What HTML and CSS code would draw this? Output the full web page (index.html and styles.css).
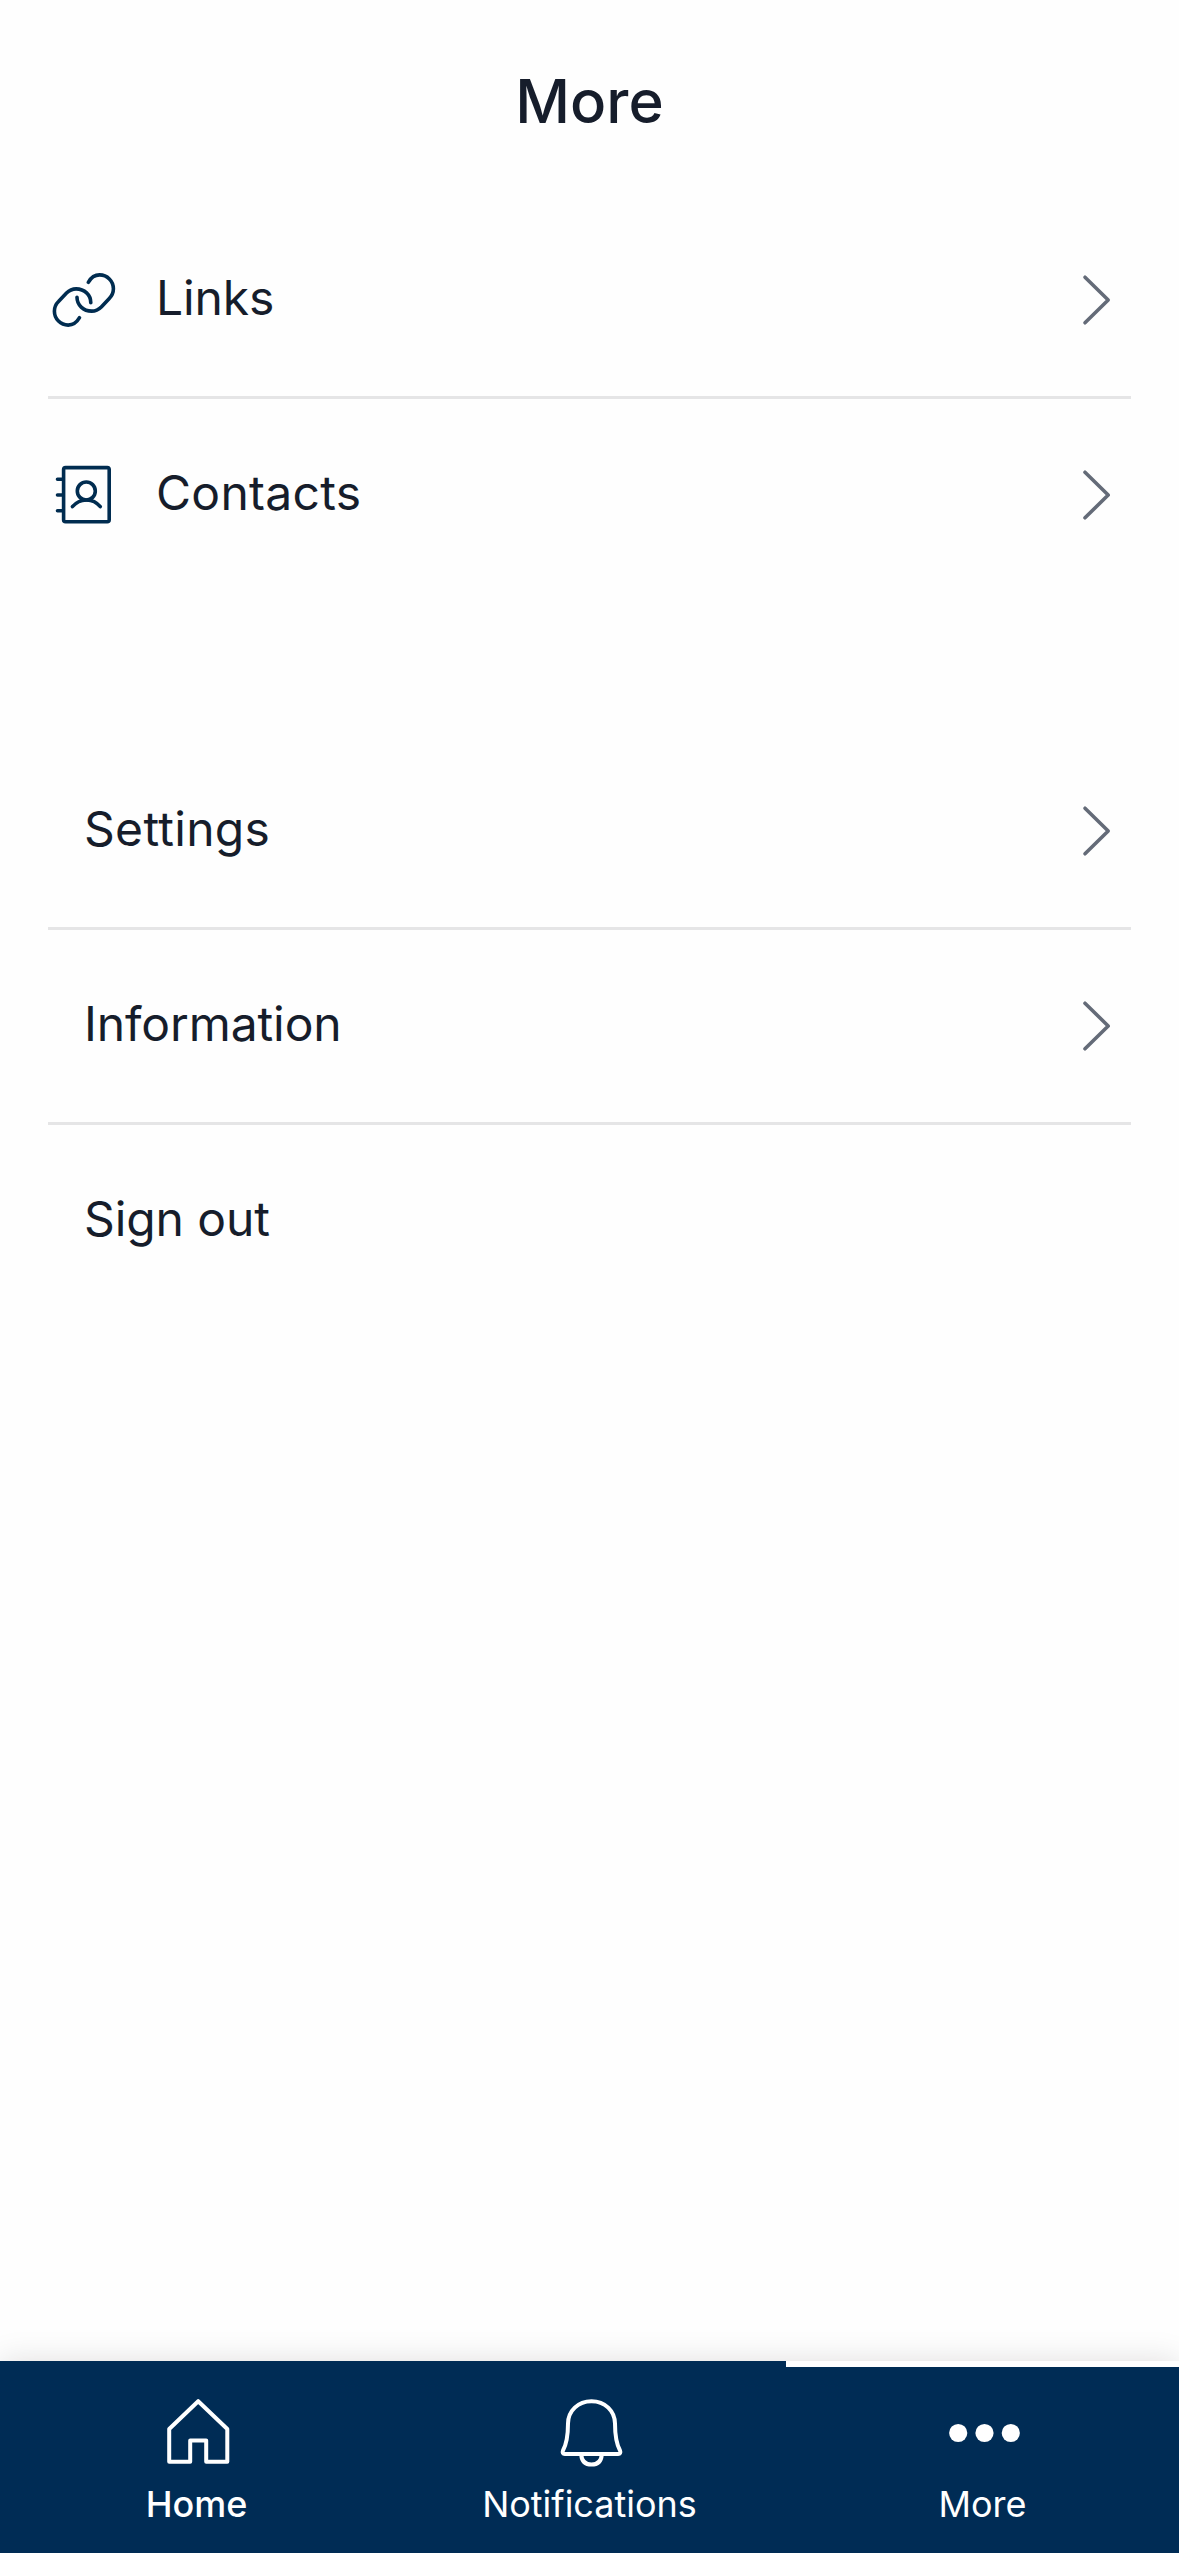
FILE: index.html
```html
<!DOCTYPE html>
<html lang="en">
<head>
<meta charset="utf-8">
<title>More</title>
<link rel="stylesheet" href="styles.css">
</head>
<body>
<div class="screen">
  <header class="header"><h1 class="title">More</h1></header>
  <main class="content">
    <ul class="list">
      <li class="row">
        <svg class="icon" viewBox="0 0 72 72"><path d="M40.3 18.3C43 13.6 47 10.9 51.6 10.9C59.2 10.9 65.4 17 65.4 24.7C65.4 28.5 63.9 31.8 61.3 34.4L53.3 42.9C50.6 45.6 47.4 47.1 43.7 47.1C35.3 47.1 29 41 29 33.3"/><path transform="rotate(180 35.9 36)" d="M40.3 18.3C43 13.6 47 10.9 51.6 10.9C59.2 10.9 65.4 17 65.4 24.7C65.4 28.5 63.9 31.8 61.3 34.4L53.3 42.9C50.6 45.6 47.4 47.1 43.7 47.1C35.3 47.1 29 41 29 33.3"/></svg>
        <span class="label">Links</span>
        <svg class="chevron" viewBox="0 0 28 50"><path d="M2 2.2L25.2 25L2 47.8"/></svg>
      </li>
      <li class="row">
        <svg class="icon" viewBox="0 0 72 72"><rect x="15.6" y="8.6" width="45.6" height="54.2" rx="2"/><path d="M9.5 20.3H15M9.5 36H15M9.5 51.7H15"/><circle cx="38.3" cy="32" r="9"/><path d="M24.4 47.7Q30 41.2 38.3 41T52.3 47.7"/></svg>
        <span class="label label-open">Contacts</span>
        <svg class="chevron" viewBox="0 0 28 50"><path d="M2 2.2L25.2 25L2 47.8"/></svg>
      </li>
    </ul>
    <ul class="list">
      <li class="row row-plain">
        <span class="label label-open">Settings</span>
        <svg class="chevron" viewBox="0 0 28 50"><path d="M2 2.2L25.2 25L2 47.8"/></svg>
      </li>
      <li class="row row-plain">
        <span class="label">Information</span>
        <svg class="chevron" viewBox="0 0 28 50"><path d="M2 2.2L25.2 25L2 47.8"/></svg>
      </li>
      <li class="row row-plain"><span class="label">Sign out</span></li>
    </ul>
  </main>
  <nav class="tabs">
    <a class="tab tab-strong">
      <svg class="tab-icon" viewBox="0 0 72 72"><path d="M37.2 5.2L66.3 33V65.8H45.2V44.4H29.2V65.8H8.2V33Z"/></svg>
      <span>Home</span>
    </a>
    <a class="tab">
      <svg class="tab-icon" viewBox="0 0 72 72"><path d="M37.5 5.2C24 5.2 14.2 15 14 27.5C14 39 13 47 9 54.5C8 56.7 9 58 10.8 58H64.2C66 58 67 56.7 66 54.5C62 47 61 39 61 27.5C60.8 15 51 5.2 37.5 5.2Z"/><path d="M27.2 58.5C27.7 65 31.5 68.6 37.5 68.6S47.3 65 47.8 58.5"/></svg>
      <span>Notifications</span>
    </a>
    <a class="tab tab-current">
      <svg class="tab-icon dots" viewBox="0 0 72 72"><circle cx="11.2" cy="37" r="9.1"/><circle cx="37.5" cy="37" r="9.1"/><circle cx="63.8" cy="37" r="9.1"/></svg>
      <span>More</span>
    </a>
  </nav>
</div>
</body>
</html>
```
FILE: styles.css
```css
* { box-sizing: border-box; }
body {
  margin: 0;
  background: #fefefe;
  color: #161d2b;
  font-family: Inter, "Liberation Sans", sans-serif;
}
.screen {
  display: flex;
  flex-direction: column;
  height: 2553px;
  overflow: hidden;
}
.header {
  display: flex;
  justify-content: center;
  align-items: center;
  height: 204px;
  padding-bottom: 2px;
}
.title {
  margin: 0;
  font-size: 60px;
  font-weight: 500;
  line-height: 72px;
}
.content {
  flex: 1;
  display: flex;
  flex-direction: column;
  gap: 144px;
  padding: 0 48px;
}
.list {
  margin: 0;
  padding: 0;
  list-style: none;
}
.row {
  display: flex;
  align-items: center;
  gap: 36px;
  height: 192px;
  padding-right: 20px;
}
.row + .row {
  height: 195px;
  border-top: 3px solid #e5e5e6;
}
.row-plain { padding-left: 36px; }
.label {
  flex: 1;
  padding-bottom: 5px;
  font-size: 48px;
  letter-spacing: -0.1px;
  line-height: 58px;
}
.label-open { letter-spacing: 0.3px; }
svg {
  flex: none;
  fill: none;
  overflow: visible;
  stroke-linecap: round;
  stroke-linejoin: round;
}
.icon {
  width: 72px;
  height: 72px;
  stroke: #002c50;
  stroke-width: 3.6;
}
.chevron {
  width: 28px;
  height: 50px;
  stroke: #646b78;
  stroke-width: 3.6;
}
.tabs {
  display: grid;
  grid-template-columns: repeat(3, 1fr);
  height: 192px;
  background: #002c55;
  box-shadow: 0 0 30px rgba(20, 10, 15, 0.13);
}
.tab {
  display: flex;
  flex-direction: column;
  align-items: center;
  gap: 14px;
  padding-top: 35px;
  color: #fff;
  font-size: 36px;
  line-height: 44px;
}
.tab-strong { font-weight: 500; }
.tab-current {
  padding-top: 29px;
  border-top: 6px solid #fff;
}
.tab-icon {
  width: 72px;
  height: 72px;
  stroke: #fff;
  stroke-width: 4;
}
.dots {
  fill: #fff;
  stroke: none;
}
```
